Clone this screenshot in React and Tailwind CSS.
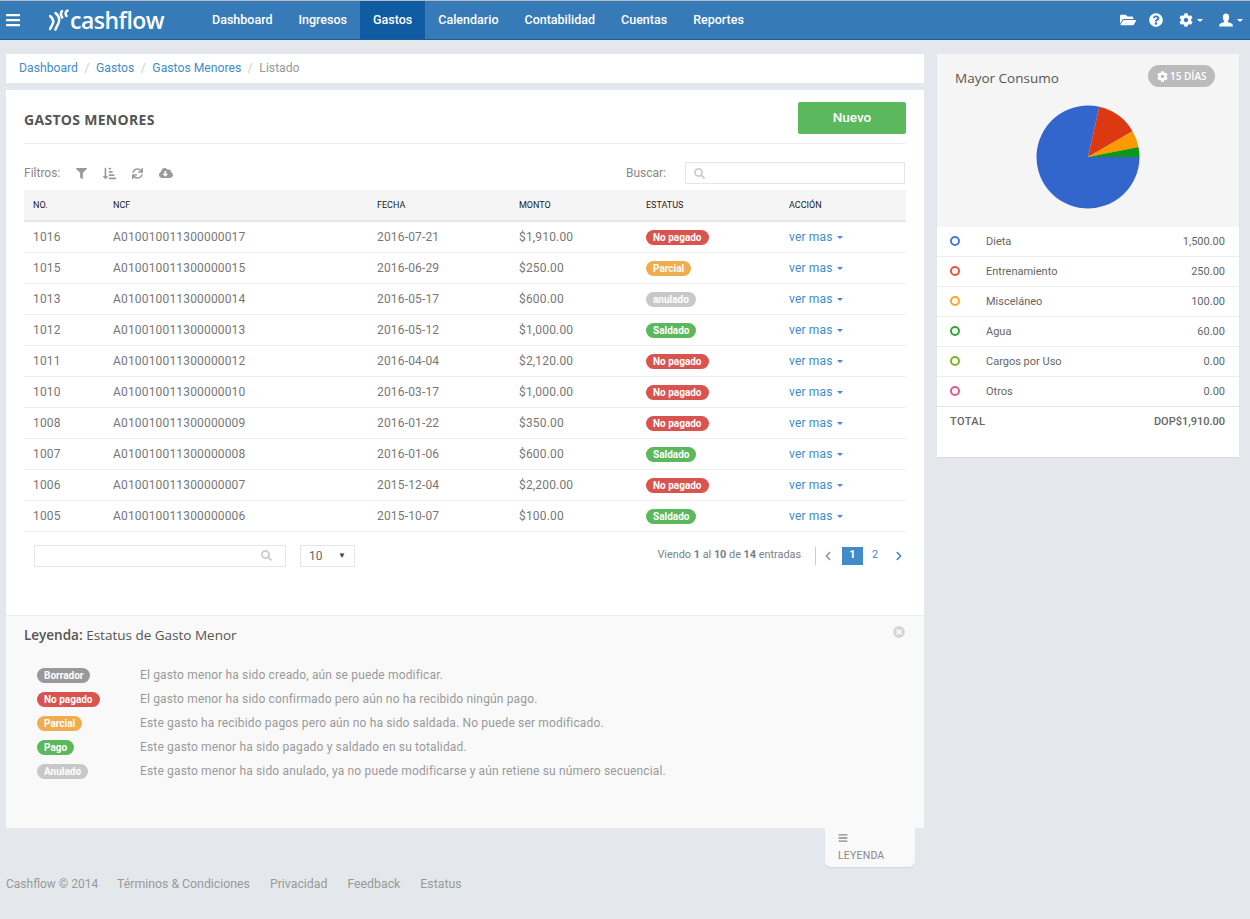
import React from "react";
import {
  FaBars, FaFolderOpen, FaQuestionCircle, FaCog, FaFilter, FaSortAmountDownAlt,
  FaSync, FaCloudDownloadAlt, FaSearch, FaChevronLeft, FaChevronRight, FaTimesCircle,
} from "react-icons/fa";

const rows = [
  ["1016", "A010010011300000017", "2016-07-21", "$1,910.00", "No pagado"],
  ["1015", "A010010011300000015", "2016-06-29", "$250.00", "Parcial"],
  ["1013", "A010010011300000014", "2016-05-17", "$600.00", "anulado"],
  ["1012", "A010010011300000013", "2016-05-12", "$1,000.00", "Saldado"],
  ["1011", "A010010011300000012", "2016-04-04", "$2,120.00", "No pagado"],
  ["1010", "A010010011300000010", "2016-03-17", "$1,000.00", "No pagado"],
  ["1008", "A010010011300000009", "2016-01-22", "$350.00", "No pagado"],
  ["1007", "A010010011300000008", "2016-01-06", "$600.00", "Saldado"],
  ["1006", "A010010011300000007", "2015-12-04", "$2,200.00", "No pagado"],
  ["1005", "A010010011300000006", "2015-10-07", "$100.00", "Saldado"],
];

const badgeColor = {
  "No pagado": "bg-[#d9534f]",
  Parcial: "bg-[#f0ad4e]",
  anulado: "bg-[#c8c8c8]",
  Anulado: "bg-[#c8c8c8]",
  Saldado: "bg-[#5cb85c]",
  Pago: "bg-[#5cb85c]",
  Borrador: "bg-[#999999]",
};

const legend = [
  ["Borrador", "El gasto menor ha sido creado, aún se puede modificar."],
  ["No pagado", "El gasto menor ha sido confirmado pero aún no ha recibido ningún pago."],
  ["Parcial", "Este gasto ha recibido pagos pero aún no ha sido saldada. No puede ser modificado."],
  ["Pago", "Este gasto menor ha sido pagado y saldado en su totalidad."],
  ["Anulado", "Este gasto menor ha sido anulado, ya no puede modificarse y aún retiene su número secuencial."],
];

const consumo = [
  ["Dieta", "1,500.00", "border-[#4a78d6]"],
  ["Entrenamiento", "250.00", "border-[#e2583a]"],
  ["Misceláneo", "100.00", "border-[#ffa526]"],
  ["Agua", "60.00", "border-[#30a838]"],
  ["Cargos por Uso", "0.00", "border-[#7cb521]"],
  ["Otros", "0.00", "border-[#e25a8a]"],
];

const nav = ["Dashboard", "Ingresos", "Gastos", "Calendario", "Contabilidad", "Cuentas", "Reportes"];
const headers = ["NO.", "NCF", "FECHA", "MONTO", "ESTATUS", "ACCIÓN"];
const footer = ["Términos & Condiciones", "Privacidad", "Feedback", "Estatus"];

function Badge({ label }) {
  return (
    <span className={`inline-flex h-[15px] items-center rounded-full px-[7px] text-[10px] font-bold leading-none text-white ${badgeColor[label]}`}>
      {label}
    </span>
  );
}

function Caret({ className = "" }) {
  return <span className={`inline-block h-0 w-0 border-x-[3px] border-t-[3px] border-x-transparent border-t-current align-middle ${className}`} />;
}

function slice(start, value, total, r) {
  const a0 = (start / total) * 2 * Math.PI;
  const a1 = ((start + value) / total) * 2 * Math.PI;
  const large = a1 - a0 > Math.PI ? 1 : 0;
  return `M0 0 L${r * Math.cos(a0)} ${r * Math.sin(a0)} A${r} ${r} 0 ${large} 1 ${r * Math.cos(a1)} ${r * Math.sin(a1)} Z`;
}

function Pie() {
  const data = [[1500, "#3366cc"], [250, "#dc3912"], [100, "#ff9900"], [60, "#109618"]];
  let acc = 0;
  return (
    <svg width="104" height="104" viewBox="-52 -52 104 104">
      {data.map(([v, c]) => {
        const d = slice(acc, v, 1910, 51.5);
        acc += v;
        return <path key={c} d={d} fill={c} />;
      })}
    </svg>
  );
}

function Logo() {
  return (
    <div className="flex items-center text-white">
      <svg width="20" height="22" viewBox="0 0 20 22" fill="none" stroke="currentColor" strokeWidth="2.5" strokeLinecap="round">
        <path d="M1 7 C3.5 9 5 11 4 14 C3.5 16 2 18 1 20" />
        <path d="M6.5 4 C9.5 6.5 11 9 9.8 13 C9 15.5 7.5 18 6.5 20.5" />
        <path d="M13 2 C11.5 4 11.5 6 13.2 8.5" />
        <path d="M18.5 1.5 C16.3 3 16 5 17.5 7" />
      </svg>
      <span className="ml-[1px] font-['Open_Sans',sans-serif] text-[23px] font-semibold leading-none tracking-[-0.5px]">cashflow</span>
    </div>
  );
}

function UserIcon() {
  return (
    <svg width="14" height="14" viewBox="0 0 14 14" fill="currentColor" className="ml-[16px]">
      <path d="M7 0.5 C9 0.5 10.2 2 10.2 4.2 C10.2 6.2 9.2 7.6 8.7 8.2 C8.6 8.9 9 9.2 10 9.6 C12 10.3 13.6 11 13.8 12 L13.8 13.5 L0.2 13.5 L0.2 12 C0.4 11 2 10.3 4 9.6 C5 9.2 5.4 8.9 5.3 8.2 C4.8 7.6 3.8 6.2 3.8 4.2 C3.8 2 5 0.5 7 0.5 Z" />
    </svg>
  );
}

export default function App() {
  return (
    <div className="min-h-[919px] bg-[#e4e8ec] font-['Roboto',sans-serif] text-[12px]">
      <header className="flex h-[40px] items-stretch border-b border-b-[#1b5c98] border-t border-t-[#b8bcc0] bg-[#377ab8] text-white">
        <div className="flex w-[48px] items-center pl-[5px]">
          <FaBars className="text-[16px]" />
        </div>
        <div className="flex w-[151px] items-center pl-[1px]">
          <Logo />
        </div>
        <nav className="flex items-stretch">
          {nav.map((n) => (
            <div
              key={n}
              className={`flex items-center px-[13px] text-[12.5px] font-medium ${n === "Gastos" ? "bg-[#105ca2]" : ""}`}
            >
              {n}
            </div>
          ))}
        </nav>
        <div className="ml-auto flex items-center pr-[7px]">
          <FaFolderOpen className="text-[16px]" />
          <FaQuestionCircle className="ml-[13px] text-[14px]" />
          <FaCog className="ml-[16px] text-[14px]" />
          <Caret className="ml-[4px]" />
          <UserIcon />
          <Caret className="ml-[4px]" />
        </div>
      </header>

      <div className="flex items-start gap-[13px] px-[6px] pt-[14px]">
        <main className="w-[918px]">
          <div className="flex h-[29px] items-center bg-white px-[13px] text-[12.2px] text-[#999999]">
            <span className="text-[#428bca]">Dashboard</span>
            <span className="px-[6.5px] text-[#cccccc]">/</span>
            <span className="text-[#428bca]">Gastos</span>
            <span className="px-[6.5px] text-[#cccccc]">/</span>
            <span className="text-[#428bca]">Gastos Menores</span>
            <span className="px-[6.5px] text-[#cccccc]">/</span>
            <span>Listado</span>
          </div>

          <section className="mt-[7px] h-[738px] bg-white">
            <div className="flex h-[525px] flex-col px-[18px]">
              <div className="mt-[12px] flex h-[42px] items-start justify-between border-b border-[#eeeeee]">
                <h1 className="pt-[7px] font-['Open_Sans',sans-serif] text-[14px] font-bold tracking-[0.3px] text-[#555555]">GASTOS MENORES</h1>
                <button className="h-[32px] w-[108px] rounded-[2px] bg-[#5cb85c] pb-[2px] text-[13.5px] font-medium text-white">Nuevo</button>
              </div>

              <div className="mt-[18px] flex h-[22px] items-center text-[#888888]">
                <span className="text-[12px]">Filtros:</span>
                <FaFilter className="ml-[16px] text-[11px] text-[#999999]" />
                <FaSortAmountDownAlt className="ml-[16px] text-[13px] text-[#999999]" />
                <FaSync className="ml-[16px] text-[11px] text-[#999999]" />
                <FaCloudDownloadAlt className="ml-[16px] text-[14px] text-[#999999]" />
                <span className="ml-auto text-[12px]">Buscar:</span>
                <div className="ml-[19px] mr-[1px] flex h-[22px] w-[220px] items-center border border-[#e4e6e8] pl-[8px]">
                  <FaSearch className="text-[11px] text-[#cccccc]" />
                </div>
              </div>

              <table className="mt-[6px] w-[882px] table-fixed border-collapse">
                <colgroup>
                  <col className="w-[80px]" />
                  <col className="w-[264px]" />
                  <col className="w-[142px]" />
                  <col className="w-[127px]" />
                  <col className="w-[143px]" />
                  <col className="w-[126px]" />
                </colgroup>
                <thead>
                  <tr className="h-[31px] border-b-2 border-[#e4e6e8] bg-[#f5f5f5]">
                    {headers.map((h) => (
                      <th key={h} className="px-[9px] pt-[2px] text-left text-[9px] font-normal text-[#222222]">{h}</th>
                    ))}
                  </tr>
                </thead>
                <tbody>
                  {rows.map((r) => (
                    <tr key={r[0]} className="h-[31px] border-b border-[#eeeeee] text-[12px] tracking-[0.17px] text-[#777777]">
                      <td className="px-[9px]">{r[0]}</td>
                      <td className="px-[9px]">{r[1]}</td>
                      <td className="px-[9px]">{r[2]}</td>
                      <td className="px-[9px]">{r[3]}</td>
                      <td className="px-[9px] tracking-normal"><Badge label={r[4]} /></td>
                      <td className="px-[9px] text-[#428bca]">ver mas <Caret className="ml-[1px]" /></td>
                    </tr>
                  ))}
                </tbody>
              </table>

              <div className="mt-[13px] flex items-center pl-[10px] pr-[2px]">
                <div className="flex h-[22px] w-[252px] items-center justify-end border border-[#e4e6e8] pr-[13px]">
                  <FaSearch className="text-[11px] text-[#cccccc]" />
                </div>
                <div className="ml-[14px] flex h-[22px] w-[55px] items-center justify-between border border-[#e4e6e8] pl-[8px] pr-[8px] text-[12px] text-[#666666]">
                  <span>10</span>
                  <span className="text-[8px] text-[#444444]">▼</span>
                </div>
                <div className="ml-auto flex items-center">
                  <span className="text-[10.85px] text-[#777f8a]">Viendo <b>1</b> al <b>10</b> de <b>14</b> entradas</span>
                  <span className="ml-[14px] h-[18px] w-px bg-[#cccccc]" />
                  <FaChevronLeft className="ml-[7px] text-[10px] text-[#999999]" />
                  <span className="ml-[9px] flex h-[18px] w-[21px] items-center justify-center bg-[#428bca] text-[11px] font-bold text-white">1</span>
                  <span className="flex h-[18px] w-[24px] items-center justify-center text-[11px] text-[#428bca]">2</span>
                  <FaChevronRight className="ml-[7px] text-[10px] text-[#428bca]" />
                </div>
              </div>
            </div>

            <div className="flex h-[213px] flex-col border-t border-[#eeeeee] bg-[#f9f9f9] px-[18px]">
              <div className="flex h-[38px] items-start justify-between pt-[9px]">
                <h2 className="font-['Open_Sans',sans-serif] text-[13.5px] leading-[20px] text-[#555555]">
                  <span className="font-semibold">Leyenda:</span> Estatus de Gasto Menor
                </h2>
                <FaTimesCircle className="mr-[1px] mt-[1px] text-[12px] text-[#d4d4d4]" />
              </div>
              <div className="mt-[13px] flex flex-col gap-[9px] pl-[13px]">
                {legend.map(([b, t]) => (
                  <div key={b} className="flex h-[15px] items-center">
                    <div className="w-[103px]"><Badge label={b} /></div>
                    <span className="text-[12px] tracking-[0.155px] text-[#999999]">{t}</span>
                  </div>
                ))}
              </div>
            </div>
          </section>

          <div className="ml-[819px] flex h-[39px] w-[90px] flex-col rounded-b-[6px] bg-[#f9f9f9] pl-[13px] pt-[5px] text-[#888888] shadow-[0_1px_1px_rgba(0,0,0,0.08)]">
            <FaBars className="text-[10px]" />
            <span className="mt-[6px] text-[10.5px] leading-[14px] tracking-[0.2px]">LEYENDA</span>
          </div>

          <footer className="mt-[9px] flex h-[16px] items-center text-[12px] text-[#999999]">
            <span className="w-[91px] whitespace-nowrap">Cashflow © 2014</span>
            {footer.map((f) => (
              <span key={f} className="ml-[20px] text-[12.3px]">{f}</span>
            ))}
          </footer>
        </main>

        <aside className="h-[403px] w-[302px] bg-white shadow-[0_1px_1px_rgba(0,0,0,0.05)]">
          <div className="h-[173px] bg-[#f5f5f5]">
            <div className="flex items-start justify-between pl-[18px] pr-[24px] pt-[11px]">
              <h3 className="mt-[3px] font-['Open_Sans',sans-serif] text-[13.5px] leading-[20px] text-[#555555]">Mayor Consumo</h3>
              <span className="flex h-[22px] items-center gap-[2px] rounded-full bg-[#bbbbbb] px-[8.5px] font-['Open_Sans',sans-serif] text-[10px] font-semibold text-white">
                <FaCog className="text-[11px]" /> 15 DÍAS
              </span>
            </div>
            <div className="mt-[17px] flex justify-center pr-[1px]">
              <Pie />
            </div>
          </div>
          {consumo.map(([n, v, c]) => (
            <div key={n} className="flex h-[30px] items-center border-b border-[#eeeeee] pl-[13px] pr-[14px] text-[11px] text-[#666666]">
              <span className={`mb-[2px] h-[10px] w-[10px] rounded-full border-2 ${c}`} />
              <span className="ml-[26px] pt-[2px]">{n}</span>
              <span className="ml-auto pt-[2px]">{v}</span>
            </div>
          ))}
          <div className="-mt-px flex h-[30px] items-center border-t border-[#e4e6e8] pl-[13px] pr-[14px] text-[11px] font-medium text-[#666666]">
            <span className="pt-[2px] tracking-[0.4px]">TOTAL</span>
            <span className="ml-auto pt-[2px]">DOP$1,910.00</span>
          </div>
        </aside>
      </div>
    </div>
  );
}
